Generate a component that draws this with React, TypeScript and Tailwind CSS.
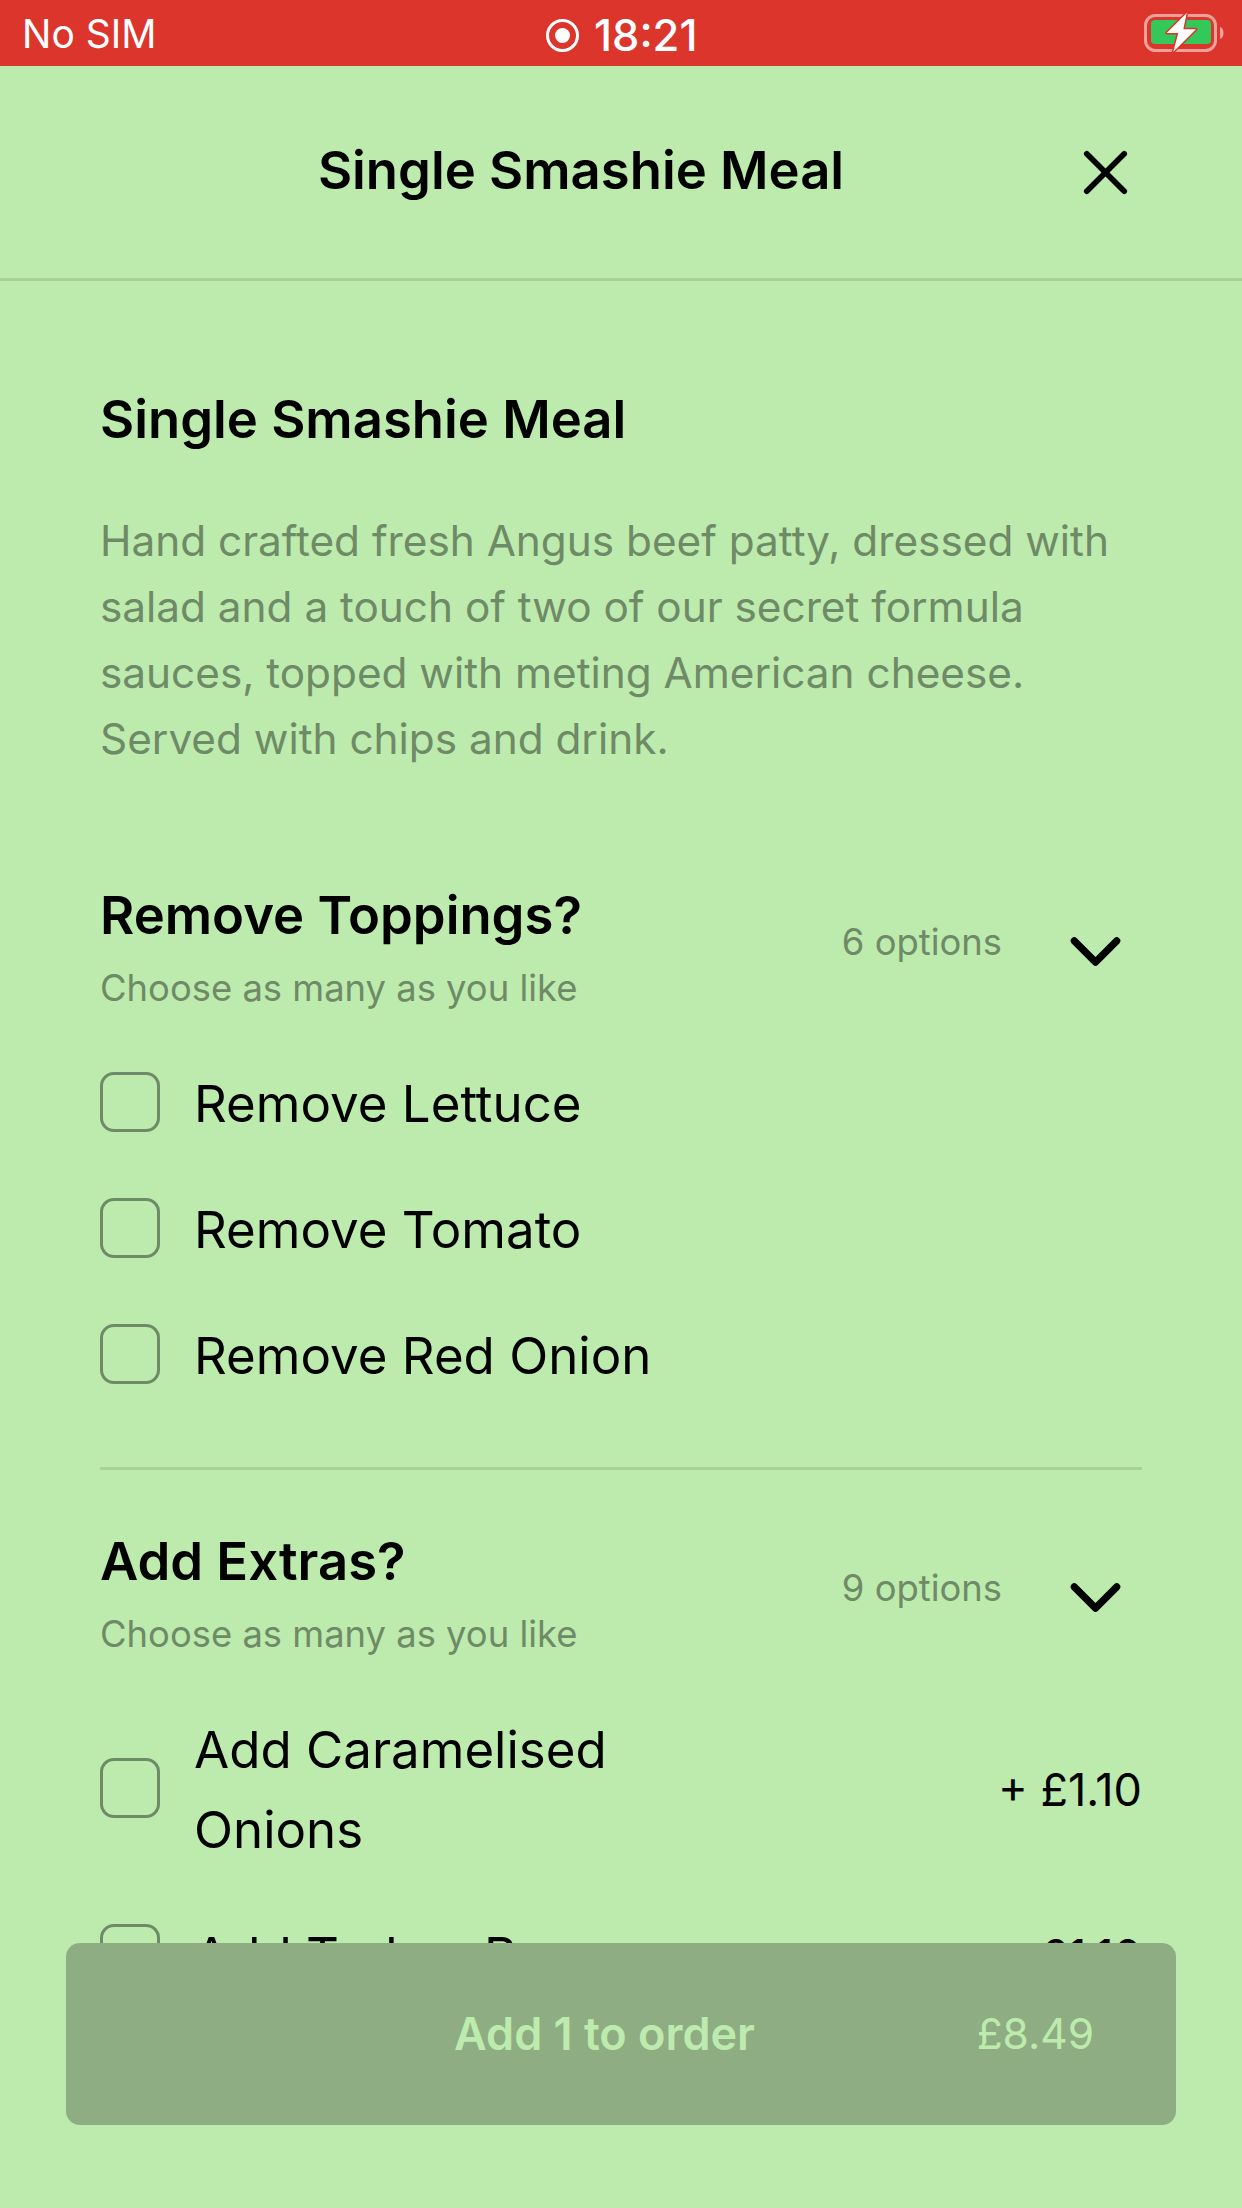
import { X, ChevronDown } from "lucide-react";

const sans = "font-['Inter','Liberation_Sans',sans-serif]";

function Battery() {
  return (
    <svg width="84" height="48" viewBox="0 0 84 48" fill="none" aria-hidden>
      <rect x="3.500" y="6.500" width="70" height="35" rx="10" stroke="#F0A09A" strokeWidth="3" />
      <rect x="9" y="11" width="60" height="24" rx="4" fill="#34C759" />
      <path d="M78 18c2.500.8 3.500 3 3.500 6s-1 5.200-3.500 6z" fill="#F0A09A" />
      <path
        d="M44.700 4 24.700 24h11.600l-5 18.700L54 20.300H41.300z"
        fill="#fff"
        stroke="#DB352C"
        strokeWidth="3"
        strokeLinejoin="round"
        paintOrder="stroke"
      />
    </svg>
  );
}

function StatusBar() {
  return (
    <div className="relative flex h-[66px] items-center justify-between bg-[#DB352C] pl-[22px] pr-[16px] text-white">
      <span className="text-[39px] leading-none">No SIM</span>
      <div className="absolute left-[546px] top-[14px] flex items-center gap-[15px]">
        <span className="flex size-[33px] items-center justify-center rounded-full border-[3px] border-white">
          <span className="size-[15px] rounded-full bg-white" />
        </span>
        <span className="text-[43.500px] font-medium leading-none">18:21</span>
      </div>
      <Battery />
    </div>
  );
}

function Checkbox() {
  return <span className="mb-[4px] size-[60px] shrink-0 rounded-[14px] border-[3px] border-[#6F8A66]" />;
}

function Option({ label, price }: { label: string; price?: string }) {
  return (
    <div className="flex items-center gap-[34px]">
      <Checkbox />
      <span className="w-[470px] text-[51px] leading-[80px] text-black">{label}</span>
      {price && <span className="ml-auto text-[45px] text-black">{price}</span>}
    </div>
  );
}

function SectionHeader({ title, count }: { title: string; count: string }) {
  return (
    <div className="flex items-center">
      <div>
        <h2 className="text-[52.600px] font-semibold leading-[62px] text-black">{title}</h2>
        <p className="mt-[17px] text-[36.400px] leading-[50px] text-[#6F8A66]">Choose as many as you like</p>
      </div>
      <span className="ml-auto pb-[12px] text-[36.400px] text-[#6F8A66]">{count}</span>
      <ChevronDown className="ml-[51px] mr-[4px] mt-[6px] size-[85px] text-black" strokeWidth={2} />
    </div>
  );
}

export default function App() {
  return (
    <div className={`${sans} relative h-[2208px] w-[1242px] overflow-hidden bg-[#BDEBAE]`}>
      <StatusBar />
      <header className="relative flex h-[215px] items-center justify-center border-b-[3px] border-[#A6D199] pb-[4px] pr-[80px]">
        <h1 className="text-[52.600px] font-semibold text-black">Single Smashie Meal</h1>
        <X className="absolute right-[99px] top-[69px] size-[75px] text-black" strokeWidth={1.8} />
      </header>
      <main className="px-[100px] pt-[107px]">
        <h2 className="text-[52.600px] font-semibold leading-[62px] text-black">Single Smashie Meal</h2>
        <p className="mt-[58px] text-[42.300px] leading-[66px] text-[#6F8A66]">
          Hand crafted fresh Angus beef patty, dressed with salad and a touch of two of our secret formula sauces, topped with meting American cheese. Served with chips and drink.
        </p>
        <section className="mt-[112px]">
          <SectionHeader title="Remove Toppings?" count="6 options" />
          <div className="mt-[51px] flex flex-col gap-[46px]">
            <Option label="Remove Lettuce" />
            <Option label="Remove Tomato" />
            <Option label="Remove Red Onion" />
          </div>
        </section>
        <section className="mt-[71px] border-t-[3px] border-[#A6D199] pt-[60px]">
          <SectionHeader title="Add Extras?" count="9 options" />
          <div className="mt-[51px] flex flex-col gap-[46px]">
            <Option label="Add Caramelised Onions" price="+ £1.10" />
            <Option label="Add Turkey Bacon" price="+ £1.10" />
          </div>
        </section>
      </main>
      <div className="absolute left-0 top-[1943px] h-[265px] w-full bg-[#BDEBAE]">
        <button className="absolute left-[66px] top-0 flex h-[182px] w-[1110px] items-center rounded-[14px] bg-[#8FAD83] pr-[82px] text-[#BDEBAE]">
          <span className="ml-[388px] text-[45px] font-semibold">Add 1 to order</span>
          <span className="ml-auto text-[42.500px]">£8.49</span>
        </button>
      </div>
    </div>
  );
}
